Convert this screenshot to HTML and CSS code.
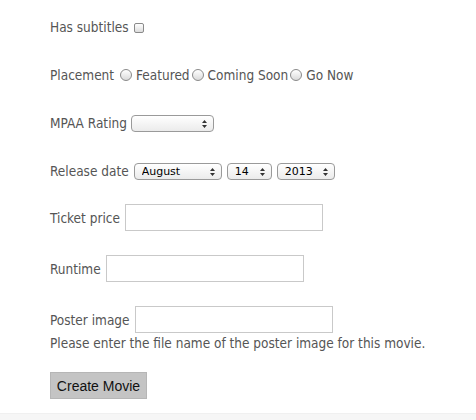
FILE: index.html
```html
<!DOCTYPE html>
<html lang="en">
<head>
<meta charset="utf-8">
<title>New Movie</title>
<link rel="stylesheet" href="styles.css">
</head>
<body>
<form class="movie-form">
  <div class="field">
    <label for="subs">Has subtitles</label>
    <input type="checkbox" id="subs" class="check">
  </div>

  <div class="field">
    <span class="label">Placement</span>
    <span class="radios">
      <input type="radio" name="placement" id="p1" class="radio"><label for="p1">Featured</label>
      <input type="radio" name="placement" id="p2" class="radio"><label for="p2">Coming Soon</label>
      <input type="radio" name="placement" id="p3" class="radio"><label for="p3">Go Now</label>
    </span>
  </div>

  <div class="field">
    <label for="mpaa">MPAA Rating</label>
    <span class="select select-mpaa">
      <select id="mpaa"><option></option></select>
      <svg class="arrows" width="5" height="8" viewBox="0 0 5 8"><path d="M0 3 L2.5 0 L5 3Z M0 5 L2.5 8 L5 5Z" fill="#333"/></svg>
    </span>
  </div>

  <div class="field field-date">
    <label for="month">Release date</label>
    <span class="select select-month">
      <select id="month"><option>August</option></select>
      <svg class="arrows" width="5" height="8" viewBox="0 0 5 8"><path d="M0 3 L2.5 0 L5 3Z M0 5 L2.5 8 L5 5Z" fill="#333"/></svg>
    </span>
    <span class="select select-day">
      <select><option>14</option></select>
      <svg class="arrows" width="5" height="8" viewBox="0 0 5 8"><path d="M0 3 L2.5 0 L5 3Z M0 5 L2.5 8 L5 5Z" fill="#333"/></svg>
    </span>
    <span class="select select-year">
      <select><option>2013</option></select>
      <svg class="arrows" width="5" height="8" viewBox="0 0 5 8"><path d="M0 3 L2.5 0 L5 3Z M0 5 L2.5 8 L5 5Z" fill="#333"/></svg>
    </span>
  </div>

  <div class="field field-input">
    <label for="price">Ticket price</label>
    <input type="text" id="price" class="text">
  </div>

  <div class="field field-input">
    <label for="runtime">Runtime</label>
    <input type="text" id="runtime" class="text">
  </div>

  <div class="field field-input field-poster">
    <label for="poster">Poster image</label>
    <input type="text" id="poster" class="text">
  </div>
  <p class="help">Please enter the file name of the poster image for this movie.</p>

  <button type="submit" class="submit">Create Movie</button>
</form>
<div class="footer"></div>
</body>
</html>
```

FILE: styles.css
```css
html, body {
  margin: 0;
  padding: 0;
  background: #fff;
}

body {
  font-family: "DejaVu Sans Condensed", "DejaVu Sans", sans-serif;
  font-stretch: condensed;
  font-size: 13.5px;
  letter-spacing: 0;
  color: #555;
}

.movie-form {
  padding: 15px 0 0 50px;
}

.field {
  display: flex;
  align-items: center;
  gap: 4px;
  height: 24px;
  margin-bottom: 24px;
}

.field-date {
  gap: 5px;
  margin-bottom: 21px;
}

.field-input {
  height: 27px;
  gap: 5px;
}

.field-poster {
  margin-bottom: 0;
}

.radios {
  display: flex;
  align-items: center;
}

.check {
  appearance: none;
  -webkit-appearance: none;
  margin: 1px 0 0 1px;
  width: 10px;
  height: 10px;
  border: 1px solid #8a8a8a;
  border-radius: 2px;
  background: linear-gradient(#ffffff, #dcdcdc);
  box-sizing: border-box;
}

.radio {
  appearance: none;
  -webkit-appearance: none;
  margin: 0 4px 0 2px;
  width: 12px;
  height: 12px;
  border: 1px solid #8a8a8a;
  border-radius: 50%;
  background: linear-gradient(#ffffff, #dadada);
  box-sizing: border-box;
}

.radio:first-child {
  margin-left: 2px;
}

.select {
  position: relative;
  display: inline-flex;
}

.select select {
  appearance: none;
  -webkit-appearance: none;
  box-sizing: border-box;
  height: 17px;
  margin: 0;
  padding: 0 14px 0 7px;
  border: 1px solid #9a9a9a;
  border-radius: 4px;
  background: linear-gradient(#ffffff, #ebebeb);
  font-family: "DejaVu Sans", sans-serif;
  font-size: 11px;
  line-height: 15px;
  letter-spacing: 0;
  color: #000;
}

.select-mpaa select { width: 83px; }
.select-month select { width: 88px; }
.select-day select { width: 45px; }
.select-year select { width: 58px; }

.arrows {
  position: absolute;
  right: 7px;
  top: 5px;
  pointer-events: none;
}

.text {
  box-sizing: border-box;
  width: 198px;
  height: 27px;
  margin: 0;
  border: 1px solid #c9c9c9;
  border-radius: 0;
  background: #fff;
  padding: 2px 4px;
}

.help {
  margin: 0 0 19px 0;
  line-height: 20px;
}

.submit {
  display: block;
  box-sizing: border-box;
  width: 97px;
  height: 27px;
  margin: 0;
  padding: 0;
  border: 1px solid #b6b6b6;
  border-radius: 0;
  background: #c4c4c4;
  font-family: "Liberation Sans", Arial, sans-serif;
  font-size: 14px;
  color: #111;
}

.footer {
  margin-top: 14px;
  height: 20px;
  background: #f6f6f6;
  border-top: 1px solid #f0f0f0;
}
```
